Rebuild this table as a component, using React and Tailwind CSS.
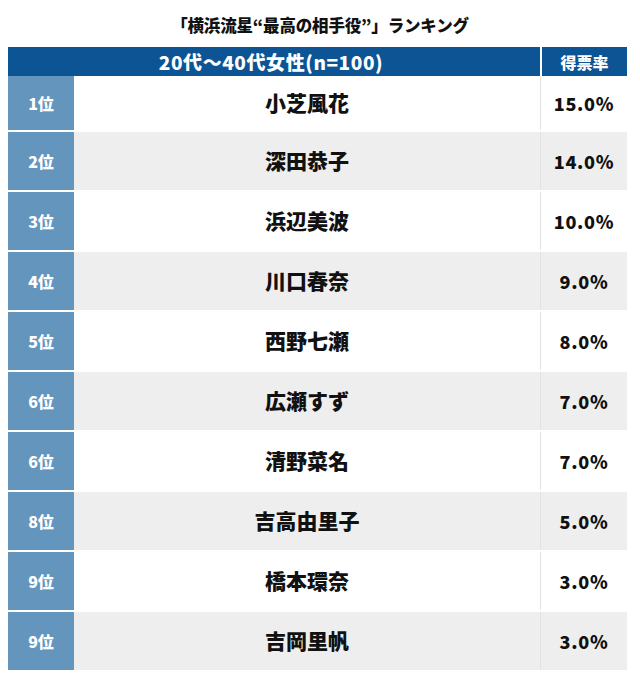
const rows = [
  { rank: '1位', name: '小芝風花', pct: '15.0%' },
  { rank: '2位', name: '深田恭子', pct: '14.0%' },
  { rank: '3位', name: '浜辺美波', pct: '10.0%' },
  { rank: '4位', name: '川口春奈', pct: '9.0%' },
  { rank: '5位', name: '西野七瀬', pct: '8.0%' },
  { rank: '6位', name: '広瀬すず', pct: '7.0%' },
  { rank: '6位', name: '清野菜名', pct: '7.0%' },
  { rank: '8位', name: '吉高由里子', pct: '5.0%' },
  { rank: '9位', name: '橋本環奈', pct: '3.0%' },
  { rank: '9位', name: '吉岡里帆', pct: '3.0%' },
];

export default function App() {
  return (
    <div
      className="w-[640px] h-[677px] bg-white overflow-hidden"
      style={{ fontFamily: '"Noto Sans CJK JP", "Noto Sans", sans-serif' }}
    >
      <div className="h-[47px] flex items-center justify-center pt-[4px]">
        <h1 className="text-[16.5px] font-black text-[#111] tracking-[-0.01em]">
          「横浜流星“最高の相手役”」ランキング
        </h1>
      </div>

      <div className="mx-[8px] w-[619px]">
        {/* header */}
        <div className="flex h-[29px] bg-[#0c5494] text-white font-black">
          <div className="w-[532px] flex items-center justify-center text-[19px] leading-none tracking-[0.03em] pr-[6px]">
            20代〜40代女性(n=100)
          </div>
          <div className="flex-1 border-l-2 border-white flex items-center justify-center text-[16px] leading-none">
            得票率
          </div>
        </div>

        {rows.map((r, i) => (
          <div
            key={i}
            className={`flex ${i === 0 ? 'h-[54px]' : 'h-[60px] border-t-2 border-white'} ${
              i % 2 === 0 ? 'bg-white' : 'bg-[#eeeeee]'
            }`}
          >
            <div className="w-[66px] bg-[#6495bd] text-white font-black text-[16px] flex items-center justify-center">
              {r.rank}
            </div>
            <div className="w-[466px] flex items-center justify-center text-[21px] font-black text-[#111]">
              {r.name}
            </div>
            <div className="flex-1 border-l border-[#e2e2e2] flex items-center justify-center text-[18px] font-black text-[#111] tracking-[0.04em]">
              {r.pct}
            </div>
          </div>
        ))}
      </div>
    </div>
  );
}
